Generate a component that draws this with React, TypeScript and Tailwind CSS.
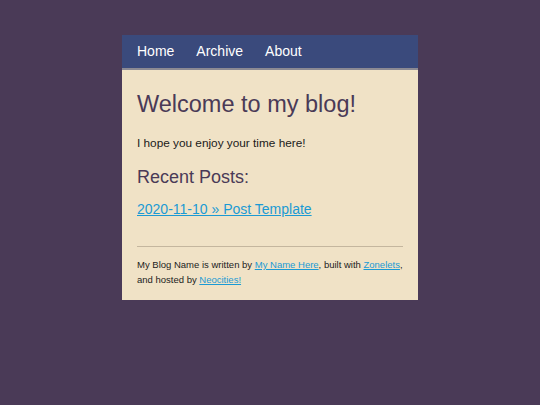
import React from 'react';

const links = ['Home', 'Archive', 'About'];

export default function App() {
  return (
    <div className="min-h-[405px] w-full bg-[#4a3a57] pt-[35px] font-['Liberation_Sans',Arial,sans-serif]">
      <div className="mx-auto w-[296px] bg-[#f0e2c6]">
        {/* nav */}
        <nav className="box-content flex h-[33px] items-center gap-[22px] border-b-2 border-[#8c8a93] bg-[#3a4a7c] px-[15px]">
          {links.map(l => (
            <a key={l} href="#" className="text-[14px] leading-[17px] text-white">
              {l}
            </a>
          ))}
        </nav>

        <div className="px-[15px] pb-[13px] pt-[20px]">
          <h1 className="text-[23.5px] leading-[28px] text-[#4a3a57]">Welcome to my blog!</h1>
          <p className="mt-[18px] text-[11.8px] leading-[14px] text-[#1a1a1a]">I hope you enjoy your time here!</p>

          <h2 className="mt-[17px] text-[18px] leading-[21px] text-[#4a3a57]">Recent Posts:</h2>
          <ul className="mt-[13px]">
            <li className="text-[14px] leading-[17px]">
              <a href="#" className="text-[#1b9ad4] underline">
                2020-11-10 » Post Template
              </a>
            </li>
          </ul>

          <hr className="mt-[28px] border-t border-[#c4b69e]" />

          <footer className="mt-[10px] text-[9.5px] leading-[15px] text-[#222]">
            My Blog Name is written by{' '}
            <a href="#" className="text-[#1b9ad4] underline">My Name Here</a>, built with{' '}
            <a href="#" className="text-[#1b9ad4] underline">Zonelets</a>, and hosted by{' '}
            <a href="#" className="text-[#1b9ad4] underline">Neocities!</a>
          </footer>
        </div>
      </div>
    </div>
  );
}
